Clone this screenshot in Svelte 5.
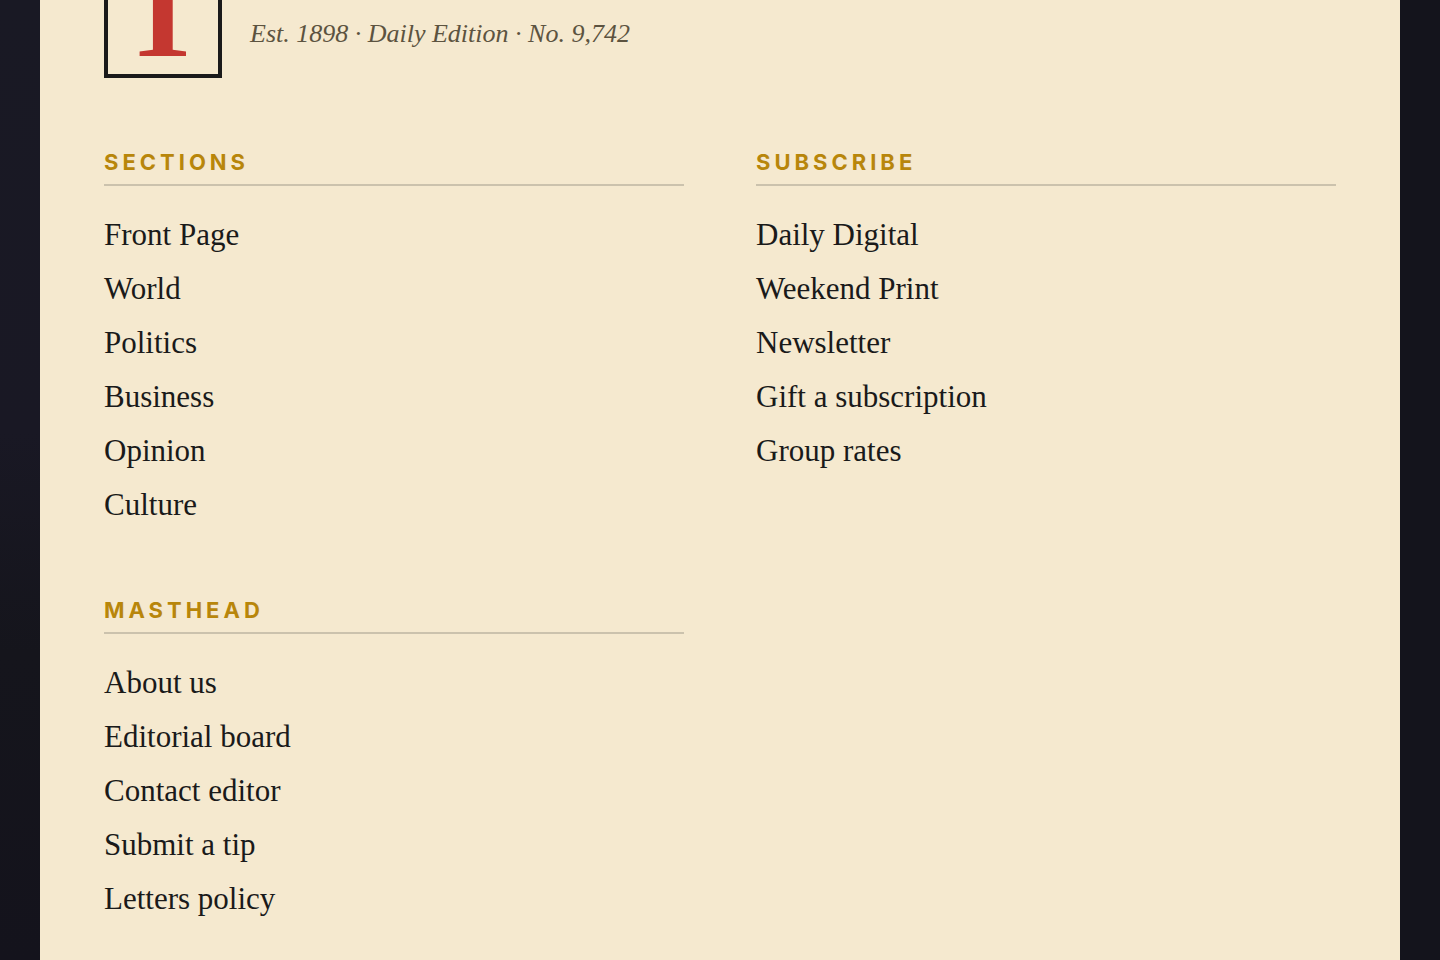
<script>
  const masthead = {
    initial: "T",
    tagline: "Est. 1898 · Daily Edition · No. 9,742"
  };

  const columns = [
    {
      title: "Sections",
      links: ["Front Page", "World", "Politics", "Business", "Opinion", "Culture"]
    },
    {
      title: "Subscribe",
      links: ["Daily Digital", "Weekend Print", "Newsletter", "Gift a subscription", "Group rates"]
    },
    {
      title: "Masthead",
      links: ["About us", "Editorial board", "Contact editor", "Submit a tip", "Letters policy"]
    }
  ];
</script>

<div class="page">
  <footer class="paper">
    <div class="brand">
      <span class="logo">{masthead.initial}</span>
      <p class="tagline">{masthead.tagline}</p>
    </div>
    <div class="columns">
      {#each columns as column}
        <nav aria-label={column.title}>
          <h2>{column.title}</h2>
          <ul>
            {#each column.links as link}
              <li><a href="#top">{link}</a></li>
            {/each}
          </ul>
        </nav>
      {/each}
    </div>
  </footer>
</div>

<style>
  :global(body) {
    margin: 0;
    background: #14141c;
  }

  .page {
    display: flex;
    box-sizing: border-box;
    min-height: 100vh;
    padding: 0 40px;
    overflow: hidden;
    background: linear-gradient(to bottom, #191924 0%, #191824 45%, #15151c 68%, #14131c 100%)
      left / 50% 100% no-repeat #14141c;
  }

  .paper {
    flex: 1;
    padding: 0 64px 32px;
    background: #f5e9cf;
    color: #1a1a1a;
    font-family: "Liberation Serif", serif;
  }

  /* the top of the brand row runs off the page */
  .brand {
    display: flex;
    align-items: flex-end;
    gap: 28px;
    margin: -40px 0 70px;
  }

  .logo {
    display: flex;
    justify-content: center;
    box-sizing: border-box;
    width: 118px;
    height: 118px;
    border: 4px solid #1a1a1a;
    color: #c43730;
    font-size: 128px;
    font-weight: 700;
    line-height: 98px;
  }

  .tagline {
    margin: 0 0 28px;
    color: #5c5340;
    font-size: 26px;
    font-style: italic;
    line-height: 32px;
  }

  .columns {
    display: grid;
    grid-template-columns: 1fr 1fr;
    gap: 64px 72px;
  }

  h2 {
    margin: 0 0 22px;
    padding-bottom: 8px;
    border-bottom: 2px solid #cbc2ad;
    color: #b8860b;
    font-family: Inter, sans-serif;
    font-size: 22px;
    font-weight: 700;
    letter-spacing: 4px;
    line-height: 28px;
    text-transform: uppercase;
  }

  ul {
    margin: 0;
    padding: 0;
    list-style: none;
  }

  li {
    font-size: 31px;
    line-height: 54px;
  }

  a {
    color: inherit;
    text-decoration: none;
  }

  a:hover {
    color: #c43730;
  }

  @media (max-width: 640px) {
    .page {
      padding: 0;
    }

    .paper {
      padding: 0 24px 32px;
    }

    .columns {
      grid-template-columns: 1fr;
    }
  }
</style>
